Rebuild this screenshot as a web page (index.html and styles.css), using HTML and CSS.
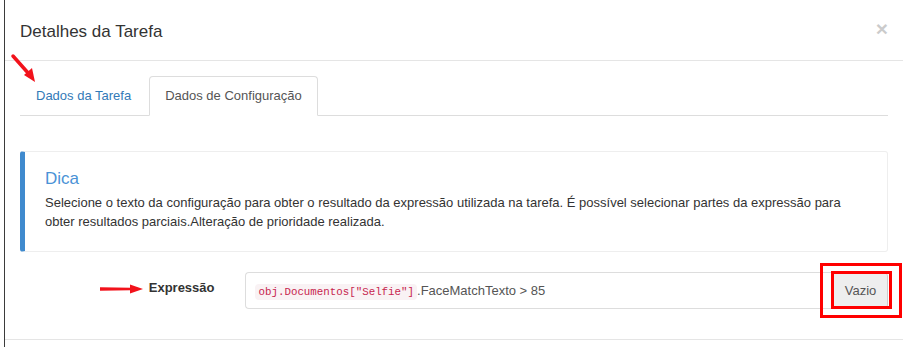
FILE: index.html
```html
<!DOCTYPE html>
<html lang="pt">
<head>
<meta charset="utf-8">
<title>Detalhes da Tarefa</title>
<link rel="stylesheet" href="styles.css">
</head>
<body>
<div class="page">
  <div class="modal">
    <div class="modal-header">
      <button class="close" type="button">&times;</button>
      <h4 class="modal-title">Detalhes da Tarefa</h4>
    </div>
    <div class="modal-body">
      <ul class="nav-tabs">
        <li class="tab"><a class="tab-link">Dados da Tarefa</a></li>
        <li class="tab active"><a class="tab-link">Dados de Configuração</a></li>
      </ul>
      <div class="tab-content">
        <div class="callout">
          <h4 class="callout-title">Dica</h4>
          <p class="callout-text">Selecione o texto da configuração para obter o resultado da expressão utilizada na tarefa. É possível selecionar partes da expressão para obter resultados parciais.Alteração de prioridade realizada.</p>
        </div>
        <div class="form-row">
          <label class="form-label">Expressão</label>
          <div class="input-group">
            <div class="expr-input"><code class="code">obj.Documentos["Selfie"]</code>.FaceMatchTexto &gt; 85</div>
            <button class="btn-addon" type="button">Vazio</button>
          </div>
        </div>
      </div>
    </div>
    <div class="modal-footer"></div>
  </div>

  <svg class="annotations" width="903" height="347" viewBox="0 0 903 347" aria-hidden="true">
    <line x1="13" y1="56" x2="29" y2="74" stroke="#f2121b" stroke-width="3.5" stroke-linecap="round"/>
    <polygon points="35,82 24,75 32,68" fill="#f2121b"/>
    <path d="M100 287.3 L131 287.8 L131 290.2 L100 290.7 Z" fill="#f2121b"/>
    <polygon points="143,289 130,284.5 130,293.5" fill="#f2121b"/>
  </svg>
  <div class="mark mark-outer"></div>
  <div class="mark mark-inner"></div>
</div>
</body>
</html>
```

FILE: styles.css
```css
* { box-sizing: border-box; }

html, body {
  margin: 0;
  padding: 0;
  background: #fff;
  overflow: hidden;
}

body {
  font-family: "Liberation Sans", Arial, Helvetica, sans-serif;
  font-size: 13px;
  line-height: 1.42857;
  color: #333;
}

.page {
  position: relative;
  width: 903px;
  height: 347px;
  overflow: hidden;
}

.modal {
  margin-left: 4px;
  width: 899px;
  min-height: 347px;
  border-left: 1px solid #3b3b3b;
  background: #fff;
}

.modal-header {
  padding: 20px 15px 16px;
  border-bottom: 1px solid #e5e5e5;
}

.modal-title {
  margin: 0;
  font-size: 17px;
  font-weight: normal;
  line-height: 1.42857;
  color: #333;
}

.close {
  float: right;
  margin-top: -2px;
  padding: 0;
  border: 0;
  background: transparent;
  font-family: "Liberation Sans", Arial, sans-serif;
  font-size: 21px;
  font-weight: bold;
  line-height: 1;
  color: #000;
  opacity: 0.2;
}

.modal-body {
  padding: 15px;
}

.nav-tabs {
  display: flex;
  margin: 0;
  padding: 0;
  list-style: none;
  border-bottom: 1px solid #ddd;
}

.tab {
  margin-right: 2px;
  margin-bottom: -1px;
}

.tab-link {
  display: block;
  padding: 10px 15px;
  line-height: 18px;
  border: 1px solid transparent;
  border-radius: 4px 4px 0 0;
  color: #337ab7;
}

.tab.active .tab-link {
  color: #555;
  background: #fff;
  border-color: #ddd #ddd transparent;
}

.tab-content {
  padding-top: 15px;
}

.callout {
  margin: 20px 0;
  padding: 18px 20px 20px;
  border: 1px solid #eee;
  border-left: 5px solid #3f8ace;
  border-radius: 3px;
}

.callout-title {
  margin: 0 0 5px;
  font-size: 17px;
  font-weight: normal;
  line-height: 1.1;
  color: #4a92d6;
}

.callout-text {
  margin: 0;
  line-height: 18.6px;
}

.form-row {
  display: flex;
  gap: 30px;
  margin-bottom: 15px;
}

.form-label {
  width: 194.5px;
  flex: none;
  padding-top: 7px;
  text-align: right;
  font-weight: bold;
}

.input-group {
  flex: 1;
  display: flex;
}

.expr-input {
  flex: 1;
  height: 37px;
  padding: 8px 9px;
  border: 1px solid #ddd;
  border-right: 0;
  border-radius: 4px 0 0 4px;
  color: #555;
  line-height: 19px;
  white-space: nowrap;
}

.code {
  padding: 2px 3px 2px 4px;
  font-family: "Liberation Mono", "Courier New", monospace;
  font-size: 10.8px;
  color: #c7254e;
  background: #f9f2f4;
  border-radius: 4px;
}

.btn-addon {
  width: 55px;
  height: 37px;
  padding: 0;
  border: 1px solid #ccc;
  border-radius: 0 4px 4px 0;
  background: #eee;
  font-family: "Liberation Sans", Arial, sans-serif;
  font-size: 13px;
  color: #555;
}

.modal-footer {
  border-top: 1px solid #e5e5e5;
  height: 20px;
}

.annotations {
  position: absolute;
  left: 0;
  top: 0;
  pointer-events: none;
}

.mark {
  position: absolute;
  border: 3px solid #f00;
  pointer-events: none;
}

.mark-outer {
  left: 820px;
  top: 263px;
  width: 82px;
  height: 55px;
}

.mark-inner {
  left: 831px;
  top: 271px;
  width: 61px;
  height: 38px;
}
```
